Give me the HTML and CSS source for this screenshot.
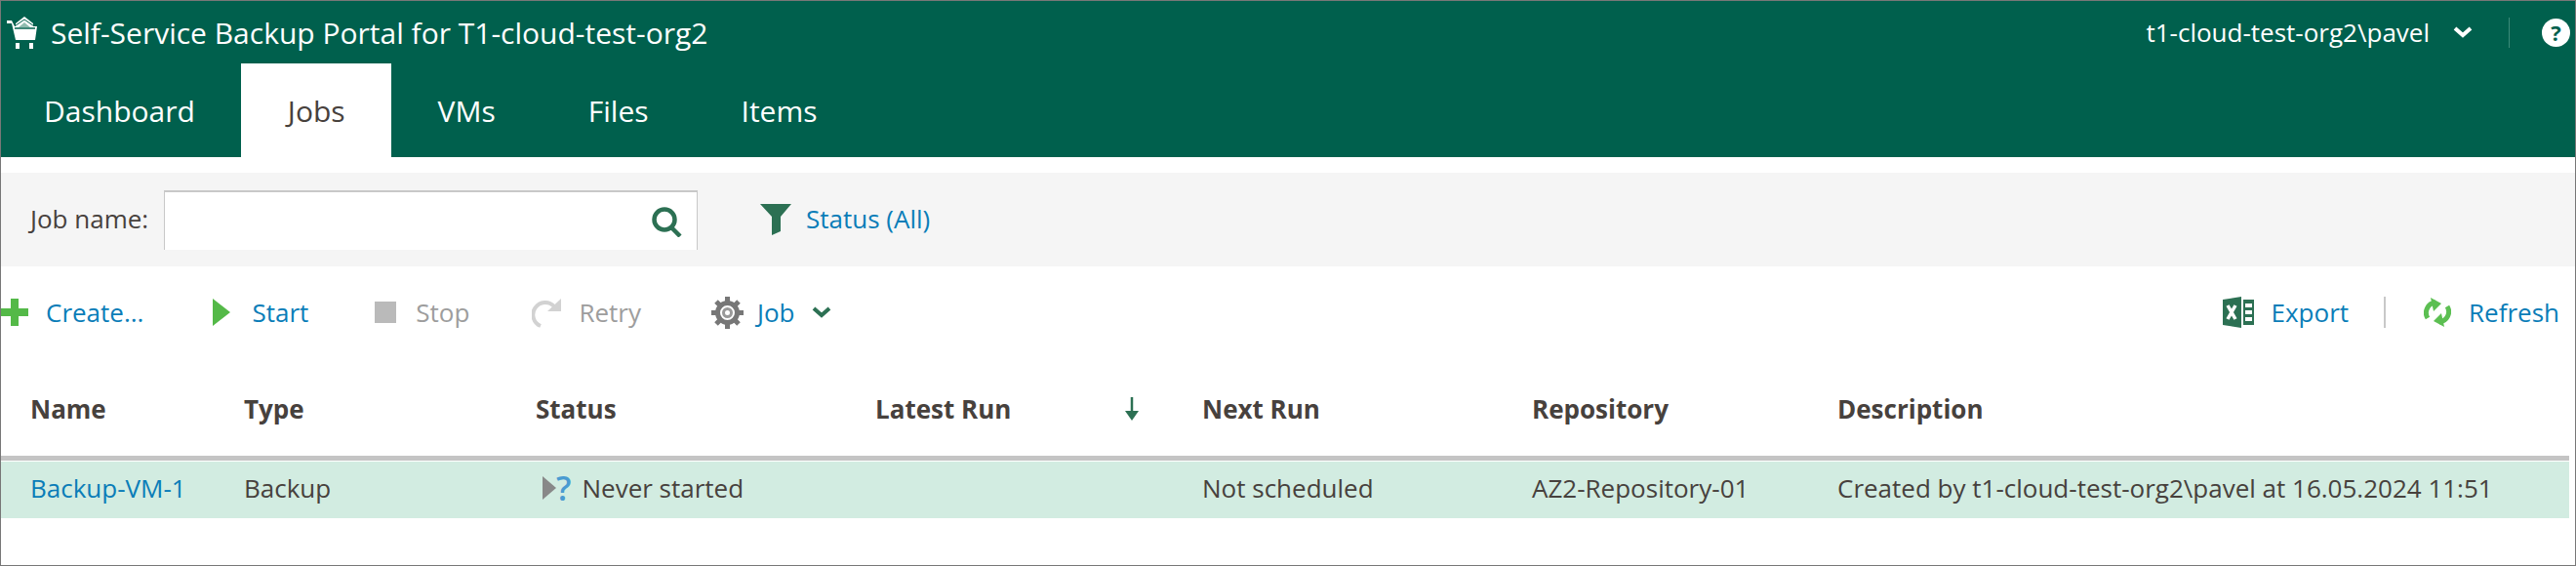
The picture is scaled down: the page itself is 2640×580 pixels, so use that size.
FILE: index.html
```html
<!DOCTYPE html>
<html lang="en">
<head>
<meta charset="utf-8">
<title>Self-Service Backup Portal</title>
<link rel="stylesheet" href="styles.css">
</head>
<body>
<div class="app">
  <header class="masthead">
    <div class="topline">
      <svg class="cart" viewBox="0 0 32 33" width="32" height="33"><path d="M0 4h5l3 6h23l-2 14H9L5 7H0z" fill="#fff"/><path d="M9 12V7l9-7 9 7v5z" fill="#fff"/><path d="M8.500 9.500 18 3l9.500 6.500" fill="none" stroke="#00604d" stroke-width="1"/><path d="M18 6l6 5H12z" fill="#8fbcb0"/><path d="M8 12h21" stroke="#00604d" stroke-width="1.500"/><rect x="9" y="27" width="4" height="6" fill="#fff"/><rect x="23" y="27" width="4" height="6" fill="#fff"/></svg>
      <h1 class="title">Self-Service Backup Portal for T1-cloud-test-org2</h1>
      <div class="user">t1-cloud-test-org2\pavel</div>
      <svg class="chev" viewBox="0 0 20 12" width="20" height="12"><path d="M2 2l8 7 8-7" fill="none" stroke="#fff" stroke-width="4"/></svg>
      <span class="headsep"></span>
      <span class="help">?</span>
    </div>
    <nav class="tabs">
      <a class="tab">Dashboard</a>
      <a class="tab active">Jobs</a>
      <a class="tab">VMs</a>
      <a class="tab">Files</a>
      <a class="tab">Items</a>
    </nav>
  </header>

  <section class="filters">
    <label class="fieldlabel">Job name:</label>
    <div class="search">
      <svg viewBox="0 0 33 31" width="33" height="31"><circle cx="14" cy="13" r="10.500" fill="none" stroke="#2c7053" stroke-width="4.500"/><path d="M21 21l9 9" stroke="#2c7053" stroke-width="4.500"/></svg>
    </div>
    <svg class="funnel" viewBox="0 0 32 32" width="32" height="32"><path d="M0 0h32L21 13v15l-9 4V13z" fill="#2c7053"/></svg>
    <a class="link">Status (All)</a>
  </section>

  <section class="toolbar">
    <div class="tool create">
      <svg viewBox="0 0 28 28" width="28" height="28"><path d="M10 0h8v10h10v8H18v10h-8V18H0v-8h10z" fill="#54b948"/></svg>
      <a class="link">Create...</a>
    </div>
    <div class="tool start">
      <svg viewBox="0 0 18 28" width="18" height="28"><path d="M0 0l18 14L0 28z" fill="#54b948"/></svg>
      <a class="link">Start</a>
    </div>
    <div class="tool stop">
      <svg viewBox="0 0 22 22" width="22" height="22"><rect width="22" height="22" fill="#bababa"/></svg>
      <span class="muted">Stop</span>
    </div>
    <div class="tool retry">
      <svg viewBox="0 0 30 31" width="30" height="31"><path d="M23 9A12.500 12.500 0 1 0 9 29" fill="none" stroke="#d2d2d2" stroke-width="4"/><path d="M30 1v13H16z" fill="#d2d2d2"/></svg>
      <span class="muted">Retry</span>
    </div>
    <div class="tool job">
      <svg viewBox="0 0 33 33" width="33" height="33"><circle cx="16.500" cy="16.500" r="10" fill="none" stroke="#777" stroke-width="5"/><circle cx="16.500" cy="16.500" r="4" fill="none" stroke="#999" stroke-width="3"/><path d="M16.500 0v33M0 16.500h33M5 5l23 23M28 5L5 28" stroke="#777" stroke-width="5" stroke-dasharray="6 21 6"/></svg>
      <a class="link">Job</a>
      <svg class="jobchev" viewBox="0 0 20 12" width="20" height="12"><path d="M2 2l8 7 8-7" fill="none" stroke="#2c7053" stroke-width="4"/></svg>
    </div>
    <div class="tool export">
      <svg viewBox="0 0 32 32" width="32" height="32"><path d="M0 3l19-3v32L0 29z" fill="#2c7053"/><path d="M21 3h11v26H21z" fill="#2c7053"/><path d="M23 7h7v4h-7zM23 14h7v4h-7zM23 21h7v4h-7z" fill="#fff"/><path d="M5 9l8 14M13 9L5 23" stroke="#fff" stroke-width="3.500"/></svg>
      <a class="link">Export</a>
    </div>
    <span class="toolsep"></span>
    <div class="tool refresh">
      <svg viewBox="0 0 28 30" width="28" height="30"><path d="M4 21A10.500 10.500 0 0 1 12 5" fill="none" stroke="#5cbf52" stroke-width="5"/><path d="M7 0l11 6-8 8z" fill="#5cbf52"/><path d="M24 9A10.500 10.500 0 0 1 16 25" fill="none" stroke="#5cbf52" stroke-width="5"/><path d="M21 30l-11-6 8-8z" fill="#5cbf52"/></svg>
      <a class="link">Refresh</a>
    </div>
  </section>

  <section class="grid">
    <div class="headrow">
      <div>Name</div>
      <div>Type</div>
      <div>Status</div>
      <div class="sorted">Latest Run
        <svg viewBox="0 0 14 24" width="14" height="24"><path d="M7 0v18" stroke="#2c7053" stroke-width="2.500"/><path d="M0 14h14l-7 10z" fill="#2c7053"/></svg>
      </div>
      <div>Next Run</div>
      <div>Repository</div>
      <div>Description</div>
    </div>
    <div class="datarow">
      <div><a class="link">Backup-VM-1</a></div>
      <div>Backup</div>
      <div class="statuscell">
        <svg viewBox="0 0 14 24" width="14" height="24"><path d="M0 0l14 12L0 24z" fill="#888"/></svg><span class="qmark">?</span>Never started
      </div>
      <div></div>
      <div>Not scheduled</div>
      <div>AZ2-Repository-01</div>
      <div>Created by t1-cloud-test-org2\pavel at 16.05.2024 11:51</div>
    </div>
  </section>
</div>
</body>
</html>
```

FILE: styles.css
```css
* { box-sizing: border-box; }
html, body { margin: 0; padding: 0; }
body {
  width: 2640px;
  height: 580px;
  overflow: hidden;
  background: #fff;
  font-family: "Open Sans", sans-serif;
  font-size: 26px;
  color: #47413d;
}
.app {
  height: 580px;
  border: 1px solid #777;
  display: flex;
  flex-direction: column;
}
.masthead {
  background: #00604d;
  color: #fff;
  height: 160px;
  display: flex;
  flex-direction: column;
  flex: none;
}
.topline {
  height: 64px;
  display: flex;
  align-items: center;
  padding-left: 6px;
  padding-right: 5px;
}
.cart { flex: none; }
.title {
  margin: 0 0 0 13px;
  font-size: 30px;
  font-weight: 400;
  flex: 1;
}
.user { font-size: 26px; }
.chev { margin-left: 24px; }
.headsep {
  width: 1px;
  height: 31px;
  background: #3c8b79;
  margin-left: 37px;
}
.help {
  width: 29px;
  height: 29px;
  border-radius: 50%;
  background: #fff;
  color: #00604d;
  font-size: 22px;
  font-weight: 700;
  line-height: 29px;
  text-align: center;
  margin-left: 33px;
}
.tabs { display: flex; height: 96px; }
.tab {
  font-size: 30px;
  padding: 0 47.5px;
  display: flex;
  align-items: center;
  color: #fff;
}
.tab:first-child { padding-left: 44px; }
.tab.active { background: #fff; color: #47413d; }
.filters {
  margin-top: 16px;
  height: 96px;
  background: #f5f5f5;
  display: flex;
  align-items: center;
  padding-left: 30px;
  padding-bottom: 2px;
  flex: none;
}
.fieldlabel { width: 137px; flex: none; }
.search {
  width: 547px;
  height: 61px;
  align-self: flex-start;
  margin-top: 18px;
  background: #fff;
  border: 1px solid #c8c8c8;
  border-top-width: 2px;
  border-bottom: 0;
  display: flex;
  justify-content: flex-end;
  padding: 15px 14px 0 0;
}
.funnel { margin-left: 64px; margin-right: 15px; margin-top: 1px; }
.link { color: #0a7db8; }
.muted { color: #9d9d9d; }
.toolbar {
  height: 96px;
  display: flex;
  align-items: center;
  flex: none;
  padding-bottom: 2px;
}
.tool { display: flex; align-items: center; gap: 18px; }
.start { margin-left: 71px; gap: 22px; }
.stop { margin-left: 68px; gap: 20px; }
.retry { margin-left: 64px; gap: 18px; }
.job { margin-left: 72px; gap: 14px; }
.jobchev { margin-left: 4px; }
.export { margin-left: auto; }
.toolsep {
  width: 2px;
  height: 32px;
  background: #c8c8c8;
  margin-left: 36px;
  margin-right: 39px;
}
.refresh { margin-right: 16px; }
.grid { flex: 1; }
.headrow, .datarow {
  display: grid;
  grid-template-columns: 219px 299px 348px 335px 338px 313px 1fr;
  align-items: center;
  padding-left: 30px;
  margin-right: 6px;
}
.headrow {
  height: 103px;
  font-weight: 700;
  border-bottom: 5px solid #c4c4c4;
  margin-bottom: 1px;
  padding-top: 2px;
}
.sorted { display: flex; align-items: center; justify-content: space-between; padding-right: 65px; }
.datarow { height: 58px; background: #d2ece1; padding-bottom: 5px; }
.statuscell { display: flex; align-items: center; }
.statuscell svg { margin-left: 7px; }
.qmark { color: #4a9bd1; font-size: 34px; font-weight: 600; margin-right: 11px; line-height: 1; }
```
